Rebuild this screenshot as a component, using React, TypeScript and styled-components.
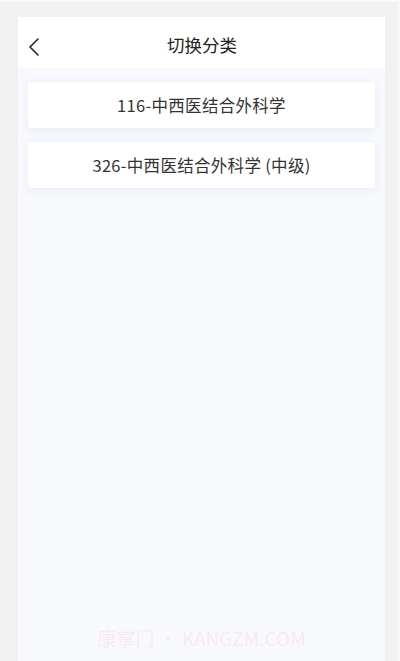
import styled, { createGlobalStyle } from 'styled-components';

const categories = ['116-中西医结合外科学', '326-中西医结合外科学 (中级)'];

export default function App() {
  return (
    <>
      <GlobalStyle />
      <Screen>
        <Panel>
          <Header>
            <BackButton aria-label="返回">
              <svg width="14" height="20" viewBox="0 0 14 20" fill="none">
                <path d="M11 2 L3 10 L11 18" stroke="#222" strokeWidth="1.6" strokeLinecap="round" strokeLinejoin="round" />
              </svg>
            </BackButton>
            <Title>切换分类</Title>
          </Header>
          <Content>
            {categories.map(name => (
              <CategoryCard key={name}>{name}</CategoryCard>
            ))}
          </Content>
          <Watermark>康掌门 • KANGZM.COM</Watermark>
        </Panel>
      </Screen>
    </>
  );
}

const GlobalStyle = createGlobalStyle`
  html, body {
    margin: 0;
    padding: 0;
    background: #f1f1f1;
    font-family: "Noto Sans CJK SC", "Noto Sans", sans-serif;
  }
`;

const Screen = styled.div`
  height: 661px;
  box-sizing: border-box;
  padding: 17px 12px 0 18px;
  background: #f1f1f1;
  border-top: 2px solid #fafafa;
  border-right: 3px solid #f7f7f7;
  display: flex;
  overflow: hidden;
`;

const Panel = styled.div`
  position: relative;
  flex: 1;
  display: flex;
  flex-direction: column;
  background: #f8f9fd;
  margin-top: -2px;
`;

const Header = styled.div`
  position: relative;
  height: 51px;
  flex-shrink: 0;
  background: #fff;
  display: flex;
  align-items: center;
  justify-content: center;
`;

const BackButton = styled.div`
  position: absolute;
  left: 9px;
  top: 20px;
  display: flex;
`;

const Title = styled.div`
  font-size: 17.5px;
  color: #222;
  font-weight: 400;
  margin-left: 1px;
  margin-top: 4px;
`;

const Content = styled.div`
  display: flex;
  flex-direction: column;
  gap: 14px;
  padding: 14px 10px 0;
`;

const CategoryCard = styled.div`
  height: 46px;
  background: #fff;
  border-radius: 3px;
  box-shadow: 0 2px 8px rgba(200, 210, 235, 0.35);
  display: flex;
  align-items: center;
  justify-content: center;
  font-size: 16.5px;
  letter-spacing: 0.3px;
  color: #333;
`;

const Watermark = styled.div`
  position: absolute;
  left: 0;
  right: 0;
  bottom: 10px;
  text-align: center;
  font-size: 19px;
  color: rgba(255, 190, 230, 0.3);
`;
